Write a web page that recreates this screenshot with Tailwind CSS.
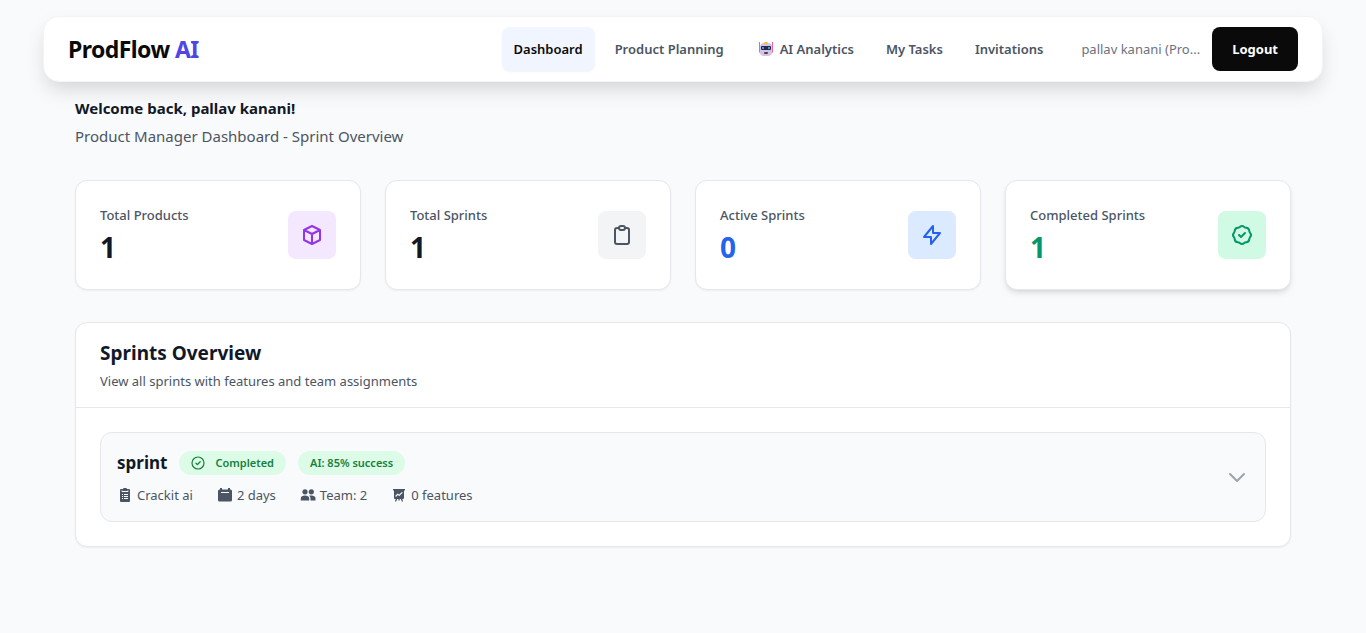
<!DOCTYPE html>
<html lang="en">
<head>
    <meta charset="UTF-8">
    <meta name="viewport" content="width=device-width, initial-scale=1.0">
    <title>ProdFlow AI - Dashboard</title>
    <script src="https://cdn.jsdelivr.net/npm/@tailwindcss/browser@4"></script>
</head>
<body class="min-h-screen bg-[#f9fafc] font-['Segoe_UI','Noto_Sans',sans-serif] text-[#111827]">
    <!-- Navbar -->
    <header class="px-4 pt-4">
        <nav class="mx-auto flex max-w-7xl items-center justify-between rounded-2xl border border-gray-100 bg-white px-6 py-2.5 shadow-[0_10px_20px_-3px_rgba(0,0,0,0.15)]">
            <a href="#" class="text-[23px] leading-8 font-bold tracking-tight text-neutral-950">ProdFlow <span class="text-[#4f46e5]">AI</span></a>

            <div class="flex items-center gap-3">
                <div class="flex items-center gap-2 text-[13px] leading-5 font-semibold text-[#4b5563]">
                    <a href="#" class="rounded-lg bg-[#f1f5ff] px-3 py-3 text-neutral-950 shadow-xs">Dashboard</a>
                    <a href="#" class="rounded-lg px-3 py-3">Product Planning</a>
                    <a href="#" class="flex items-center gap-1 rounded-lg px-3 py-3">
                        <!-- Robot -->
                        <svg class="h-4 w-5" viewBox="0 0 20 16" aria-hidden="true">
                            <path d="M3.500 1v8M16.500 1v8" stroke="#f0648c" stroke-width="1" />
                            <rect x="3" y="5" width="14" height="7" rx="1.500" fill="#ee6a8f" />
                            <rect x="4" y="2" width="12" height="13" rx="4" fill="#d5c3e3" />
                            <rect x="8" y="1" width="4" height="2" rx="1" fill="#f9b84a" />
                            <rect x="5" y="5" width="10" height="4" rx="1" fill="#2b2747" />
                            <rect x="6" y="6" width="2" height="2" fill="#22a7f2" />
                            <rect x="12" y="6" width="2" height="2" fill="#22a7f2" />
                            <rect x="8" y="11" width="4" height="2" rx="1" fill="#4b3b63" />
                        </svg>
                        AI Analytics
                    </a>
                    <a href="#" class="rounded-lg px-3 py-3">My Tasks</a>
                    <a href="#" class="rounded-lg px-3 py-3">Invitations</a>
                </div>
                <span class="ml-3.5 text-[13px] leading-5 text-[#6b7280]">pallav kanani (Pro...</span>
                <button type="button" class="rounded-lg bg-neutral-950 px-5 py-3 text-[13px] leading-5 font-bold text-white">Logout</button>
            </div>
        </nav>
    </header>

    <main class="mx-auto max-w-7xl px-8 pt-3.5 pb-8">
        <!-- Welcome -->
        <section class="mb-8">
            <h1 class="text-[15px] leading-6 font-bold">Welcome back, pallav kanani!</h1>
            <p class="mt-1 text-[15px] leading-6 text-[#4b5563]">Product Manager Dashboard - Sprint Overview</p>
        </section>

        <!-- Stats -->
        <section class="mb-8 grid grid-cols-4 gap-6">
            <div class="flex items-center justify-between rounded-xl border border-gray-200 bg-white p-6 shadow-xs">
                <div>
                    <p class="text-[13px] leading-5 font-medium text-[#4b5563]">Total Products</p>
                    <p class="mt-1 text-[28px] leading-9 font-bold">1</p>
                </div>
                <div class="flex size-12 items-center justify-center rounded-lg bg-[#f3e8ff] text-[#9333ea]">
                    <svg class="size-6" fill="none" viewBox="0 0 24 24" stroke="currentColor" stroke-width="2" stroke-linecap="round" stroke-linejoin="round">
                        <path d="M20 7l-8-4-8 4m16 0l-8 4m8-4v10l-8 4m0-10L4 7m8 4v10M4 7v10l8 4" />
                    </svg>
                </div>
            </div>
            <div class="flex items-center justify-between rounded-xl border border-gray-200 bg-white p-6 shadow-xs">
                <div>
                    <p class="text-[13px] leading-5 font-medium text-[#4b5563]">Total Sprints</p>
                    <p class="mt-1 text-[28px] leading-9 font-bold">1</p>
                </div>
                <div class="flex size-12 items-center justify-center rounded-lg bg-[#f3f4f6] text-[#4b5563]">
                    <svg class="size-6" fill="none" viewBox="0 0 24 24" stroke="currentColor" stroke-width="2" stroke-linecap="round" stroke-linejoin="round">
                        <path d="M9 5H7a2 2 0 00-2 2v12a2 2 0 002 2h10a2 2 0 002-2V7a2 2 0 00-2-2h-2M9 5a2 2 0 002 2h2a2 2 0 002-2M9 5a2 2 0 012-2h2a2 2 0 012 2" />
                    </svg>
                </div>
            </div>
            <div class="flex items-center justify-between rounded-xl border border-gray-200 bg-white p-6 shadow-xs">
                <div>
                    <p class="text-[13px] leading-5 font-medium text-[#4b5563]">Active Sprints</p>
                    <p class="mt-1 text-[28px] leading-9 font-bold text-[#2563eb]">0</p>
                </div>
                <div class="flex size-12 items-center justify-center rounded-lg bg-[#dbeafe] text-[#2563eb]">
                    <svg class="size-6" fill="none" viewBox="0 0 24 24" stroke="currentColor" stroke-width="2" stroke-linecap="round" stroke-linejoin="round">
                        <path d="M13 10V3L4 14h7v7l9-11h-7z" />
                    </svg>
                </div>
            </div>
            <div class="flex items-center justify-between rounded-xl border border-gray-200 bg-white p-6 shadow-md">
                <div>
                    <p class="text-[13px] leading-5 font-medium text-[#4b5563]">Completed Sprints</p>
                    <p class="mt-1 text-[28px] leading-9 font-bold text-[#059669]">1</p>
                </div>
                <div class="flex size-12 items-center justify-center rounded-lg bg-[#d1fae5] text-[#059669]">
                    <svg class="size-6" fill="none" viewBox="0 0 24 24" stroke="currentColor" stroke-width="2" stroke-linecap="round" stroke-linejoin="round">
                        <path d="M9 12l2 2 4-4M7.835 4.697a3.42 3.42 0 001.946-.806 3.42 3.42 0 014.438 0 3.42 3.42 0 001.946.806 3.42 3.42 0 013.138 3.138 3.42 3.42 0 00.806 1.946 3.42 3.42 0 010 4.438 3.42 3.42 0 00-.806 1.946 3.42 3.42 0 01-3.138 3.138 3.42 3.42 0 00-1.946.806 3.42 3.42 0 01-4.438 0 3.42 3.42 0 00-1.946-.806 3.42 3.42 0 01-3.138-3.138 3.42 3.42 0 00-.806-1.946 3.42 3.42 0 010-4.438 3.42 3.42 0 00.806-1.946 3.42 3.42 0 013.138-3.138z" />
                    </svg>
                </div>
            </div>
        </section>

        <!-- Sprints Overview -->
        <section class="rounded-xl border border-gray-200 bg-white shadow-xs">
            <div class="border-b border-gray-200 px-6 py-4">
                <h2 class="text-[19px] leading-7 font-bold">Sprints Overview</h2>
                <p class="mt-1 text-[13px] leading-5 text-[#4b5563]">View all sprints with features and team assignments</p>
            </div>
            <div class="p-6">
                <div class="flex items-center justify-between rounded-xl border border-gray-200 bg-[#f9fafc] p-4">
                    <div>
                        <div class="flex items-center gap-3">
                            <h3 class="text-[17px] leading-7 font-bold">sprint</h3>
                            <span class="flex items-center gap-2 rounded-full bg-[#dcfce7] px-3 py-1 text-[11px] leading-4 font-semibold text-[#15803d]">
                                <svg class="size-4" fill="none" viewBox="0 0 16 16" stroke="currentColor" stroke-linecap="round" stroke-linejoin="round">
                                    <circle cx="7" cy="8" r="6" stroke-width="1.200" />
                                    <path stroke-width="1.300" d="M5 8.200l1.400 1.400L9.200 6.800" />
                                </svg>
                                Completed
                            </span>
                            <span class="rounded-full bg-[#dcfce7] px-3 py-1 text-[11px] leading-4 font-semibold text-[#15803d]">AI: 85% success</span>
                        </div>
                        <div class="mt-2 flex items-center gap-6 text-[13px] leading-5 text-[#4b5563]">
                            <span class="flex items-center gap-1">
                                <svg class="size-4" viewBox="0 0 16 16" fill="currentColor">
                                    <rect x="3" y="2" width="10" height="13" rx="1" />
                                    <rect x="6" y="1" width="4" height="3" rx="1" />
                                    <path stroke="#f9fafc" stroke-width="1" d="M5 3.500v1M11 3.500v1M5 4.500h6M5 7.500h1M7 7.500h4M5 9.500h1M7 9.500h4M5 11.500h1M7 11.500h4" />
                                </svg>
                                Crackit ai
                            </span>
                            <span class="flex items-center gap-1">
                                <svg class="size-4" viewBox="0 0 16 16" fill="currentColor">
                                    <rect x="3" y="1" width="2" height="3" />
                                    <rect x="11" y="1" width="2" height="3" />
                                    <path fill-rule="evenodd" d="M2.500 2.500h11A1.500 1.500 0 0115 4v9a1.500 1.500 0 01-1.500 1.500h-11A1.500 1.500 0 011 13V4a1.500 1.500 0 011.500-1.500zM4 5v1h8V5z" />
                                </svg>
                                2 days
                            </span>
                            <span class="flex items-center gap-1">
                                <svg class="size-4" viewBox="0 0 16 16" fill="currentColor">
                                    <circle cx="5" cy="4.800" r="2.600" />
                                    <circle cx="11.300" cy="4.800" r="2.600" />
                                    <path d="M.8 13.500v-2C.8 9.300 2.800 8.500 5 8.500s4.200.8 4.200 3v2zM10.500 13.500v-2c0-1.200-.5-2.200-1.300-2.800.6-.2 1.400-.2 2.100-.2 2.200 0 4.200.8 4.200 3v2z" />
                                </svg>
                                Team: 2
                            </span>
                            <span class="flex items-center gap-1">
                                <svg class="size-4" viewBox="0 0 16 16" fill="currentColor" stroke-linecap="round" stroke-linejoin="round">
                                    <path d="M2 2h12v1.500h-1V11a1 1 0 01-1 1H4a1 1 0 01-1-1V3.500H2z" />
                                    <path fill="none" stroke="currentColor" stroke-width="1.300" d="M5.500 12l-.8 2M10.500 12l.8 2M8 12v1" />
                                    <path fill="none" stroke="#f9fafc" stroke-width="1.200" d="M5 9l1.800-1.800L8.200 8.400 11 5.600" />
                                </svg>
                                0 features
                            </span>
                        </div>
                    </div>
                    <button type="button" aria-label="Expand sprint" class="text-[#9ca3af]">
                        <svg class="size-6" fill="none" viewBox="0 0 24 24" stroke="currentColor" stroke-width="2" stroke-linecap="round" stroke-linejoin="round">
                            <path d="M19 9l-7 7-7-7" />
                        </svg>
                    </button>
                </div>
            </div>
        </section>
    </main>
</body>
</html>
